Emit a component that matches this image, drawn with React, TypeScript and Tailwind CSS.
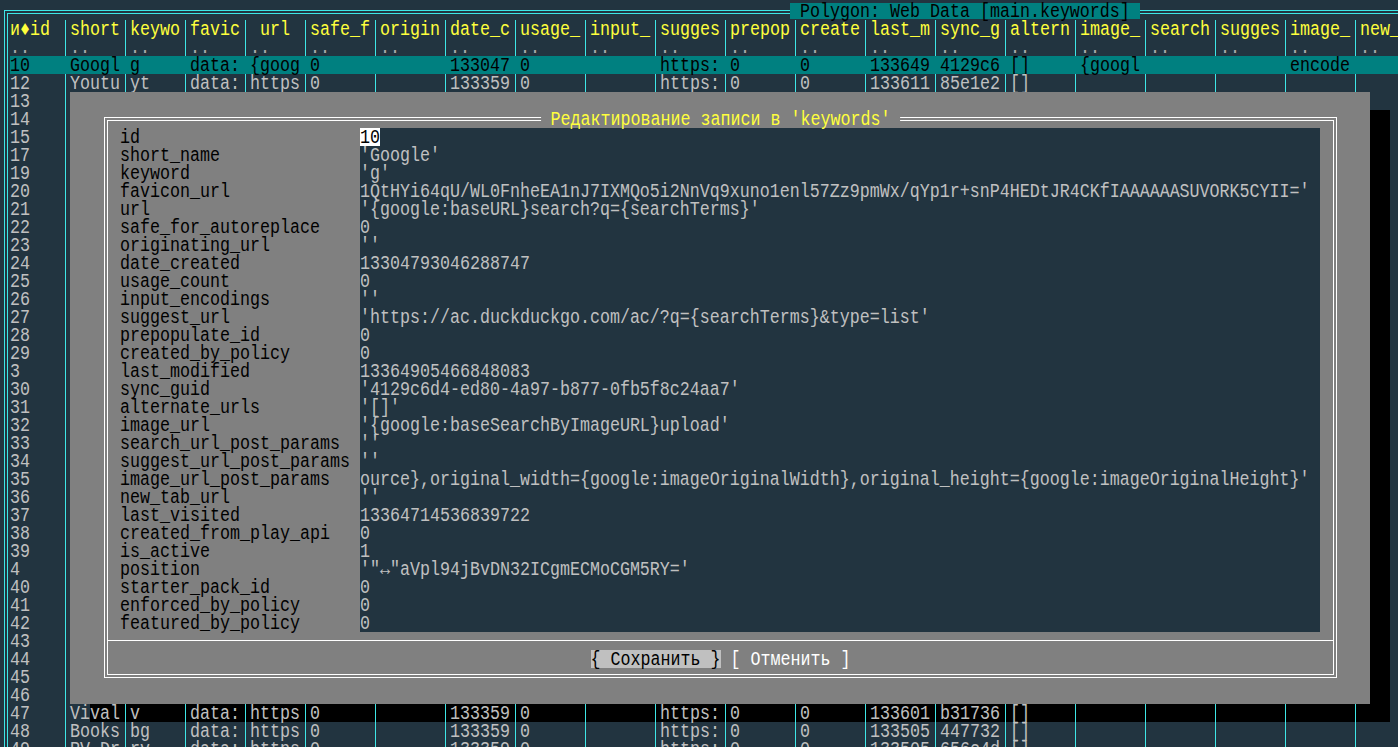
import { Fragment } from "react";

const W: Record<number, string> = { 4: "w-[40px]", 5: "w-[50px]", 6: "w-[60px]" };
const COLS = [5, 5, 5, 5, 5, 6, 6, 6, 6, 6, 6, 6, 6, 6, 6, 6, 6, 6, 6, 6, 4];
const HEAD = ["и♦id", "short", "keywo", "favic", " url", "safe_f", "origin", "date_c", "usage_", "input_", "sugges", "prepop", "create", "last_m", "sync_g", "altern", "image_", "search", "sugges", "image_", "new_"];

const IDS = ["13", "14", "15", "17", "19", "20", "21", "22", "23", "24", "25", "26", "27", "28", "29", "3", "30", "31", "32", "33", "34", "35", "36", "37", "38", "39", "4", "40", "41", "42", "43", "44", "45", "46"];

const FIELDS: [string, string][] = [
  ["id", "10"],
  ["short_name", "'Google'"],
  ["keyword", "'g'"],
  ["favicon_url", "1QtHYi64qU/WL0FnheEA1nJ7IXMQo5i2NnVq9xuno1enl57Zz9pmWx/qYp1r+snP4HEDtJR4CKfIAAAAAASUVORK5CYII='"],
  ["url", "'{google:baseURL}search?q={searchTerms}'"],
  ["safe_for_autoreplace", "0"],
  ["originating_url", "''"],
  ["date_created", "13304793046288747"],
  ["usage_count", "0"],
  ["input_encodings", "''"],
  ["suggest_url", "'https://ac.duckduckgo.com/ac/?q={searchTerms}&type=list'"],
  ["prepopulate_id", "0"],
  ["created_by_policy", "0"],
  ["last_modified", "13364905466848083"],
  ["sync_guid", "'4129c6d4-ed80-4a97-b877-0fb5f8c24aa7'"],
  ["alternate_urls", "'[]'"],
  ["image_url", "'{google:baseSearchByImageURL}upload'"],
  ["search_url_post_params", "''"],
  ["suggest_url_post_params", "''"],
  ["image_url_post_params", "ource},original_width={google:imageOriginalWidth},original_height={google:imageOriginalHeight}'"],
  ["new_tab_url", "''"],
  ["last_visited", "13364714536839722"],
  ["created_from_play_api", "0"],
  ["is_active", "1"],
  ["position", "'\"↔\"aVpl94jBvDN32ICgmECMoCGM5RY='"],
  ["starter_pack_id", "0"],
  ["enforced_by_policy", "0"],
  ["featured_by_policy", "0"],
];

// terminal glyphs are taller than Liberation Mono, stretch them a bit
function T({ children }: { children: React.ReactNode }) {
  return (
    <span className="inline-block translate-y-[1.5px] scale-y-[1.2] whitespace-pre leading-[13px]">{children}</span>
  );
}

type Tone = "head" | "dots" | "cur" | "norm";

function Row({ cells, tone = "norm" }: { cells: string[]; tone?: Tone }) {
  const cur = tone === "cur";
  const color =
    tone === "head" ? "text-[#ffff3c]" : tone === "cur" ? "bg-[#008080] text-black" : tone === "dots" ? "text-[#a8a8a8]" : "text-[#c0c0c0]";
  return (
    <div className={`flex h-[18px] leading-[18px] ${color}`}>
      {COLS.map((w, i) => (
        <Fragment key={i}>
          <div className={`${W[w]} shrink-0`}>
            <T>{cells[i] ?? ""}</T>
          </div>
          {i < COLS.length - 1 && (
            <div className="w-[10px] shrink-0 pl-[5px]">
              <div className={`h-full w-px ${cur ? "" : "bg-[#3ee6e6]"}`} />
            </div>
          )}
        </Fragment>
      ))}
    </div>
  );
}

const dots = COLS.map(() => "..");

export default function App() {
  return (
    <div className="relative isolate h-[747px] w-[1398px] overflow-hidden bg-[#223440] pt-[2px] font-['Liberation_Mono','DejaVu_Sans_Mono',monospace] text-[16.67px]">
      {/* dialog shadow sits under the table text */}
      <div className="absolute left-[90px] top-[110px] -z-10 h-[612px] w-[1300px] bg-black" />

      <div className="relative ml-[4px] mt-[8px] w-[1500px] border-l-4 border-t-4 border-double border-[#3ee6e6] pl-[2px] pt-[6px]">
        <div className="absolute left-[782px] top-[-11px] h-[16px] bg-[#008080] leading-[16px] text-black">
          <T> Polygon: Web Data [main.keywords] </T>
        </div>

        <Row cells={HEAD} tone="head" />
        <Row cells={dots} tone="dots" />
        <Row
          tone="cur"
          cells={["10", "Googl", "g", "data:", "{goog", "0", "", "133047", "0", "", "https:", "0", "0", "133649", "4129c6", "[]", "{googl", "", "", "encode", ""]}
        />
        <Row cells={["12", "Youtu", "yt", "data:", "https", "0", "", "133359", "0", "", "https:", "0", "0", "133611", "85e1e2", "[]"]} />
        {IDS.map((id) => (
          <Row key={id} cells={[id]} />
        ))}
        <Row cells={["47", "Vival", "v", "data:", "https", "0", "", "133359", "0", "", "https:", "0", "0", "133601", "b31736", "[]"]} />
        <Row cells={["48", "Books", "bg", "data:", "https", "0", "", "133359", "0", "", "https:", "0", "0", "133505", "447732", "[]"]} />
        <Row cells={["49", "RV-Dr", "rv", "data:", "https", "0", "", "133359", "0", "", "https:", "0", "0", "133505", "656c4d", "[]"]} />
      </div>

      {/* edit dialog */}
      <div className="absolute left-[70px] top-[92px] h-[612px] w-[1300px] bg-[#808080] pl-[34px] pt-[25px]">
        <div className="relative h-[561px] w-[1233px] border-4 border-double border-white pt-[7px]">
          <div className="absolute left-1/2 top-[-11px] h-[18px] -translate-x-1/2 bg-[#808080] leading-[18px] text-[#ffff3c]">
            <T> Редактирование записи в 'keywords' </T>
          </div>

          <div className="pl-[12px]">
            {FIELDS.map(([k, v], i) => (
              <div key={k} className="flex h-[18px] leading-[18px]">
                <div className="w-[240px] shrink-0 text-black">
                  <T>{k}</T>
                </div>
                <div className="w-[960px] shrink-0 bg-[#223440] text-[#c0c0c0]">
                  {i === 0 ? (
                    <span className="inline-block h-[18px] bg-white text-black">
                      <T>{v}</T>
                    </span>
                  ) : (
                    <T>{v}</T>
                  )}
                </div>
              </div>
            ))}
          </div>

          <div className="mt-[8px] h-px bg-white" />

          <div className="mt-[9px] flex h-[18px] justify-center gap-[10px] leading-[18px]">
            <span className="bg-[#c0c0c0] text-black">
              <T>{"{ Сохранить }"}</T>
            </span>
            <span className="text-white">
              <T>[ Отменить ]</T>
            </span>
          </div>
        </div>
      </div>
    </div>
  );
}
